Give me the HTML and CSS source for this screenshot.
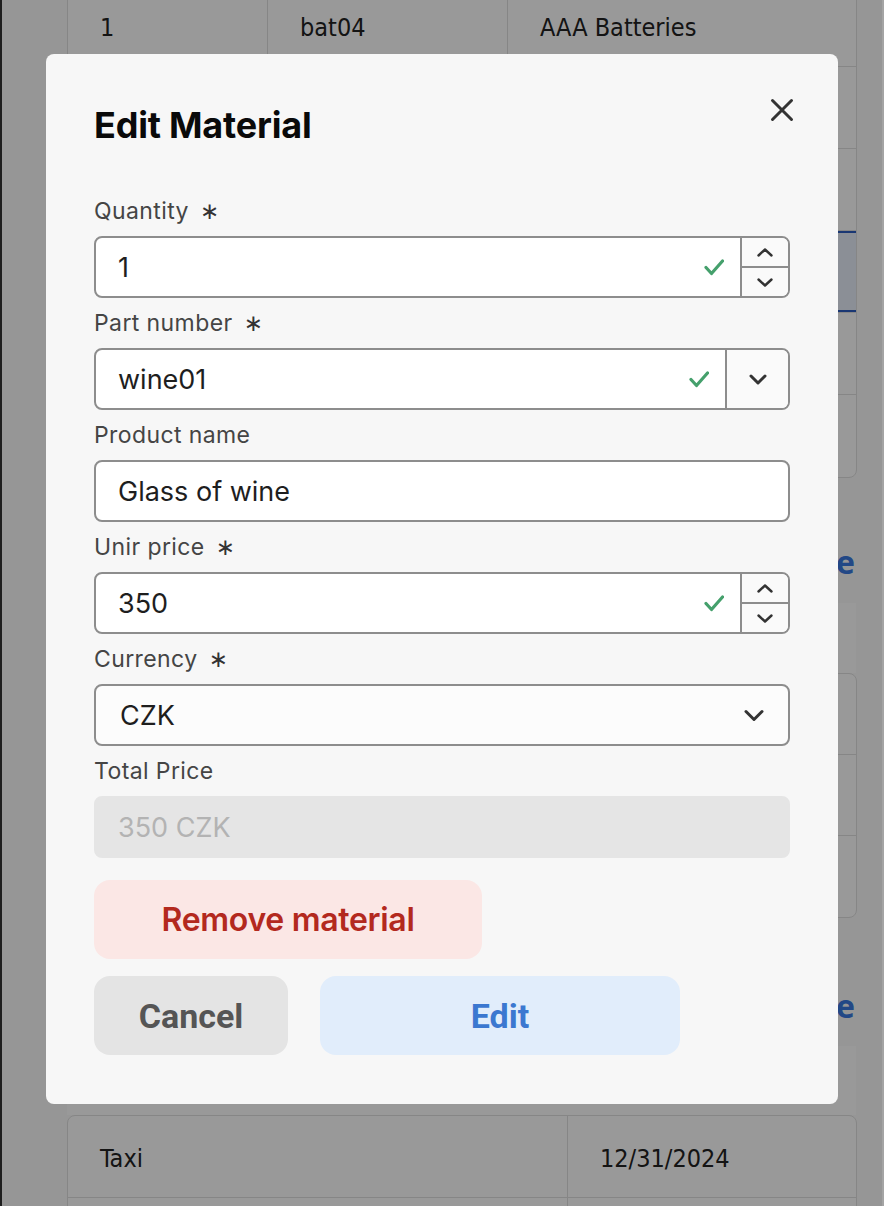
FILE: index.html
```html
<!DOCTYPE html>
<html lang="en">
<head>
<meta charset="utf-8">
<title>Edit Material</title>
<link rel="stylesheet" href="styles.css">
</head>
<body>
<div class="window-edge"></div>
<div class="window-edge-right"></div>
<div class="page">
  <div class="table t1">
    <div class="row"><div class="cell c1">1</div><div class="cell c2">bat04</div><div class="cell c3">AAA Batteries</div></div>
    <div class="row"><div class="cell c1"></div><div class="cell c2"></div><div class="cell c3"></div></div>
    <div class="row"><div class="cell c1"></div><div class="cell c2"></div><div class="cell c3"></div></div>
    <div class="row sel"><div class="cell c1">1</div><div class="cell c2">wine01</div><div class="cell c3">Glass of wine</div></div>
    <div class="row"><div class="cell c1"></div><div class="cell c2"></div><div class="cell c3"></div></div>
    <div class="row"><div class="cell c1"></div><div class="cell c2"></div><div class="cell c3"></div></div>
  </div>
  <div class="section-head s1"><span class="link">Add machine</span></div>
  <div class="band b1"></div>
  <div class="table t2">
    <div class="row"><div class="cell"></div></div>
    <div class="row"><div class="cell"></div></div>
    <div class="row"><div class="cell"></div></div>
  </div>
  <div class="section-head s2"><span class="link">Add expense</span></div>
  <div class="band b2"></div>
  <div class="table t3">
    <div class="row"><div class="cell c1">Taxi</div><div class="cell c3">12/31/2024</div></div>
    <div class="row"><div class="cell c1"></div><div class="cell c3"></div></div>
  </div>
</div>

<div class="overlay"></div>

<div class="modal" role="dialog" aria-labelledby="modal-title">
  <div class="modal-head">
    <h2 class="modal-title" id="modal-title">Edit Material</h2>
    <button class="close" aria-label="Close">
      <svg viewBox="0 0 24 24" width="24" height="24"><path d="M2.5 2.5 L21.5 21.5 M21.5 2.5 L2.5 21.5" stroke="#333" stroke-width="3" stroke-linecap="round" fill="none"/></svg>
    </button>
  </div>

  <div class="form">
    <div class="field">
      <div class="label">Quantity <span class="req">∗</span></div>
      <div class="input">
        <span class="value">1</span>
        <svg class="check" viewBox="0 0 20 17" width="20" height="17"><path d="M2 8.5 L7.5 14.5 L18.5 2" stroke="#45a06c" stroke-width="3.2" stroke-linecap="round" stroke-linejoin="round" fill="none"/></svg>
        <div class="spinner">
          <div class="spin-btn"><svg viewBox="0 0 16 9" width="16" height="9"><path d="M1.5 7.5 L8 1.5 L14.5 7.5" stroke="#333" stroke-width="2.4" stroke-linecap="round" stroke-linejoin="round" fill="none"/></svg></div>
          <div class="spin-btn"><svg viewBox="0 0 16 9" width="16" height="9"><path d="M1.5 1.5 L8 7.5 L14.5 1.5" stroke="#333" stroke-width="2.4" stroke-linecap="round" stroke-linejoin="round" fill="none"/></svg></div>
        </div>
      </div>
    </div>

    <div class="field">
      <div class="label">Part number <span class="req">∗</span></div>
      <div class="input">
        <span class="value">wine01</span>
        <svg class="check" viewBox="0 0 20 17" width="20" height="17"><path d="M2 8.5 L7.5 14.5 L18.5 2" stroke="#45a06c" stroke-width="3.2" stroke-linecap="round" stroke-linejoin="round" fill="none"/></svg>
        <div class="drop-btn"><svg viewBox="0 0 18 11" width="18" height="11"><path d="M2 2 L9 9 L16 2" stroke="#333" stroke-width="3" stroke-linecap="round" stroke-linejoin="round" fill="none"/></svg></div>
      </div>
    </div>

    <div class="field">
      <div class="label">Product name</div>
      <div class="input">
        <span class="value">Glass of wine</span>
      </div>
    </div>

    <div class="field">
      <div class="label">Unir price <span class="req">∗</span></div>
      <div class="input">
        <span class="value">350</span>
        <svg class="check" viewBox="0 0 20 17" width="20" height="17"><path d="M2 8.5 L7.5 14.5 L18.5 2" stroke="#45a06c" stroke-width="3.2" stroke-linecap="round" stroke-linejoin="round" fill="none"/></svg>
        <div class="spinner">
          <div class="spin-btn"><svg viewBox="0 0 16 9" width="16" height="9"><path d="M1.5 7.5 L8 1.5 L14.5 7.5" stroke="#333" stroke-width="2.4" stroke-linecap="round" stroke-linejoin="round" fill="none"/></svg></div>
          <div class="spin-btn"><svg viewBox="0 0 16 9" width="16" height="9"><path d="M1.5 1.5 L8 7.5 L14.5 1.5" stroke="#333" stroke-width="2.4" stroke-linecap="round" stroke-linejoin="round" fill="none"/></svg></div>
        </div>
      </div>
    </div>

    <div class="field">
      <div class="label">Currency <span class="req">∗</span></div>
      <div class="input select">
        <span class="value">CZK</span>
        <svg class="select-chev" viewBox="0 0 20 13" width="20" height="13"><path d="M2 2.5 L10 10.5 L18 2.5" stroke="#333" stroke-width="3" stroke-linecap="round" stroke-linejoin="round" fill="none"/></svg>
      </div>
    </div>

    <div class="field">
      <div class="label">Total Price</div>
      <div class="input disabled">
        <span class="value">350 CZK</span>
      </div>
    </div>
  </div>

  <button class="btn btn-remove">Remove material</button>
  <div class="btn-row">
    <button class="btn btn-cancel">Cancel</button>
    <button class="btn btn-edit">Edit</button>
  </div>
</div>
</body>
</html>
```

FILE: styles.css
```css
* { box-sizing: border-box; }
html, body { margin: 0; height: 100%; }
body {
  background: #fbfbfb;
  font-family: "Inter", "Noto Sans", sans-serif;
  overflow: hidden;
}

.window-edge {
  position: fixed;
  left: 0; top: 0; bottom: 0;
  width: 2px;
  background: #1e1e1e;
  z-index: 3;
}
.window-edge-right {
  position: fixed;
  right: 0; top: 0; bottom: 0;
  width: 2px;
  background: #a4a4a4;
  z-index: 3;
}

/* background page */
.page {
  padding-left: 67px;
  width: 857px;
}
.table {
  border: 1px solid #e0e0e0;
  border-radius: 8px;
  background: #ffffff;
  overflow: hidden;
}
.t1 { margin-top: -16px; }
.row {
  display: flex;
  height: 82px;
  border-bottom: 1px solid #e0e0e0;
}
.row:last-child { border-bottom: none; }
.t2 .row { height: 81px; }
.row.sel {
  background: #e8eefb;
  box-shadow: inset 0 2px 0 #2c5cc0, inset 0 -2px 0 #2c5cc0;
}
.cell {
  display: flex;
  align-items: center;
  padding-left: 32px;
  padding-top: 3px;
  font-family: "DejaVu Sans Condensed", "DejaVu Sans", sans-serif;
  font-stretch: condensed;
  font-size: 25px;
  color: #222222;
  border-right: 1px solid #e0e0e0;
}
.cell:last-child { border-right: none; flex: 1; }
.t1 .c1 { width: 200px; }
.t1 .c2 { width: 240px; }
.t2 .cell { flex: 1; }
.t3 .c1 { width: 500px; }

.section-head {
  height: 34px;
  display: flex;
  justify-content: flex-end;
  align-items: center;
  padding-right: 2px;
}
.s1 { margin-top: 66px; }
.s2 { margin-top: 70px; }
.link {
  font-family: "Open Sans", sans-serif;
  font-weight: 700;
  font-size: 32px;
  color: #3a78e0;
}
.band {
  background: #ffffff;
  width: 789px;
}
.b1 { margin-top: 25px; height: 70px; }
.b2 { margin-top: 24px; height: 69px; }

.overlay {
  position: fixed;
  inset: 0;
  background: rgba(0, 0, 0, 0.4);
  z-index: 1;
}

/* modal */
.modal {
  position: fixed;
  left: 46px;
  top: 54px;
  width: 792px;
  z-index: 2;
  background: #f7f7f7;
  border-radius: 8px;
  padding: 48px 48px 49px 48px;
}
.modal-head {
  display: flex;
  justify-content: space-between;
  align-items: flex-start;
  margin-top: 1px;
}
.modal-title {
  margin: 0;
  font-size: 36px;
  line-height: 44px;
  font-weight: 700;
  color: #0a0a0a;
  letter-spacing: -0.2px;
}
.close {
  width: 24px;
  height: 24px;
  margin-top: -5px;
  margin-right: -4px;
  border: 0;
  padding: 0;
  background: none;
  display: flex;
}

.form {
  margin-top: 50px;
  display: flex;
  flex-direction: column;
  gap: 11px;
}
.field {
  display: flex;
  flex-direction: column;
  gap: 11px;
}
.label {
  height: 28px;
  font-size: 23px;
  line-height: 28px;
  letter-spacing: 0.4px;
  color: #454545;
  white-space: nowrap;
}
.req {
  font-family: "DejaVu Sans", sans-serif;
  font-size: 23px;
  line-height: 1;
  color: #333;
  margin-left: 4px;
}

.input {
  display: flex;
  align-items: center;
  height: 62px;
  border: 2px solid #8d8d8d;
  border-radius: 8px;
  background: #ffffff;
  overflow: hidden;
}
.value {
  flex: 1;
  padding-left: 22px;
  font-size: 27px;
  color: #1e1e1e;
}
.check { margin-right: 16px; flex: none; }
.spinner {
  align-self: stretch;
  width: 48px;
  border-left: 2px solid #8d8d8d;
  display: flex;
  flex-direction: column;
  background: #fafafa;
}
.spin-btn {
  flex: 1;
  display: flex;
  align-items: center;
  justify-content: center;
}
.spin-btn + .spin-btn { border-top: 2px solid #8d8d8d; }
.drop-btn {
  align-self: stretch;
  width: 63px;
  border-left: 2px solid #8d8d8d;
  display: flex;
  align-items: center;
  justify-content: center;
  background: #fafafa;
}
.select { background: #fcfcfc; }
.select .value { padding-left: 24px; }
.select-chev { margin-right: 24px; }
.disabled {
  background: #e5e5e5;
  border-color: #e5e5e5;
}
.disabled .value { color: #b3b3b3; }

.btn {
  border: 0;
  height: 79px;
  border-radius: 16px;
  font-family: "Inter", "Noto Sans", sans-serif;
  cursor: pointer;
  padding: 0;
}
.btn-remove {
  display: block;
  margin-top: 22px;
  width: 388px;
  background: #fbe7e5;
  color: #b3291e;
  font-size: 32px;
  font-weight: 600;
  letter-spacing: -0.3px;
}
.btn-row {
  margin-top: 17px;
  display: flex;
  gap: 32px;
}
.btn-cancel,
.btn-edit {
  font-family: "Roboto", "Inter", sans-serif;
  font-weight: 700;
  font-size: 34px;
}
.btn-cancel {
  width: 194px;
  background: #e4e4e4;
  color: #555555;
}
.btn-edit {
  width: 360px;
  background: #e1edfb;
  color: #3b78d0;
}
```
